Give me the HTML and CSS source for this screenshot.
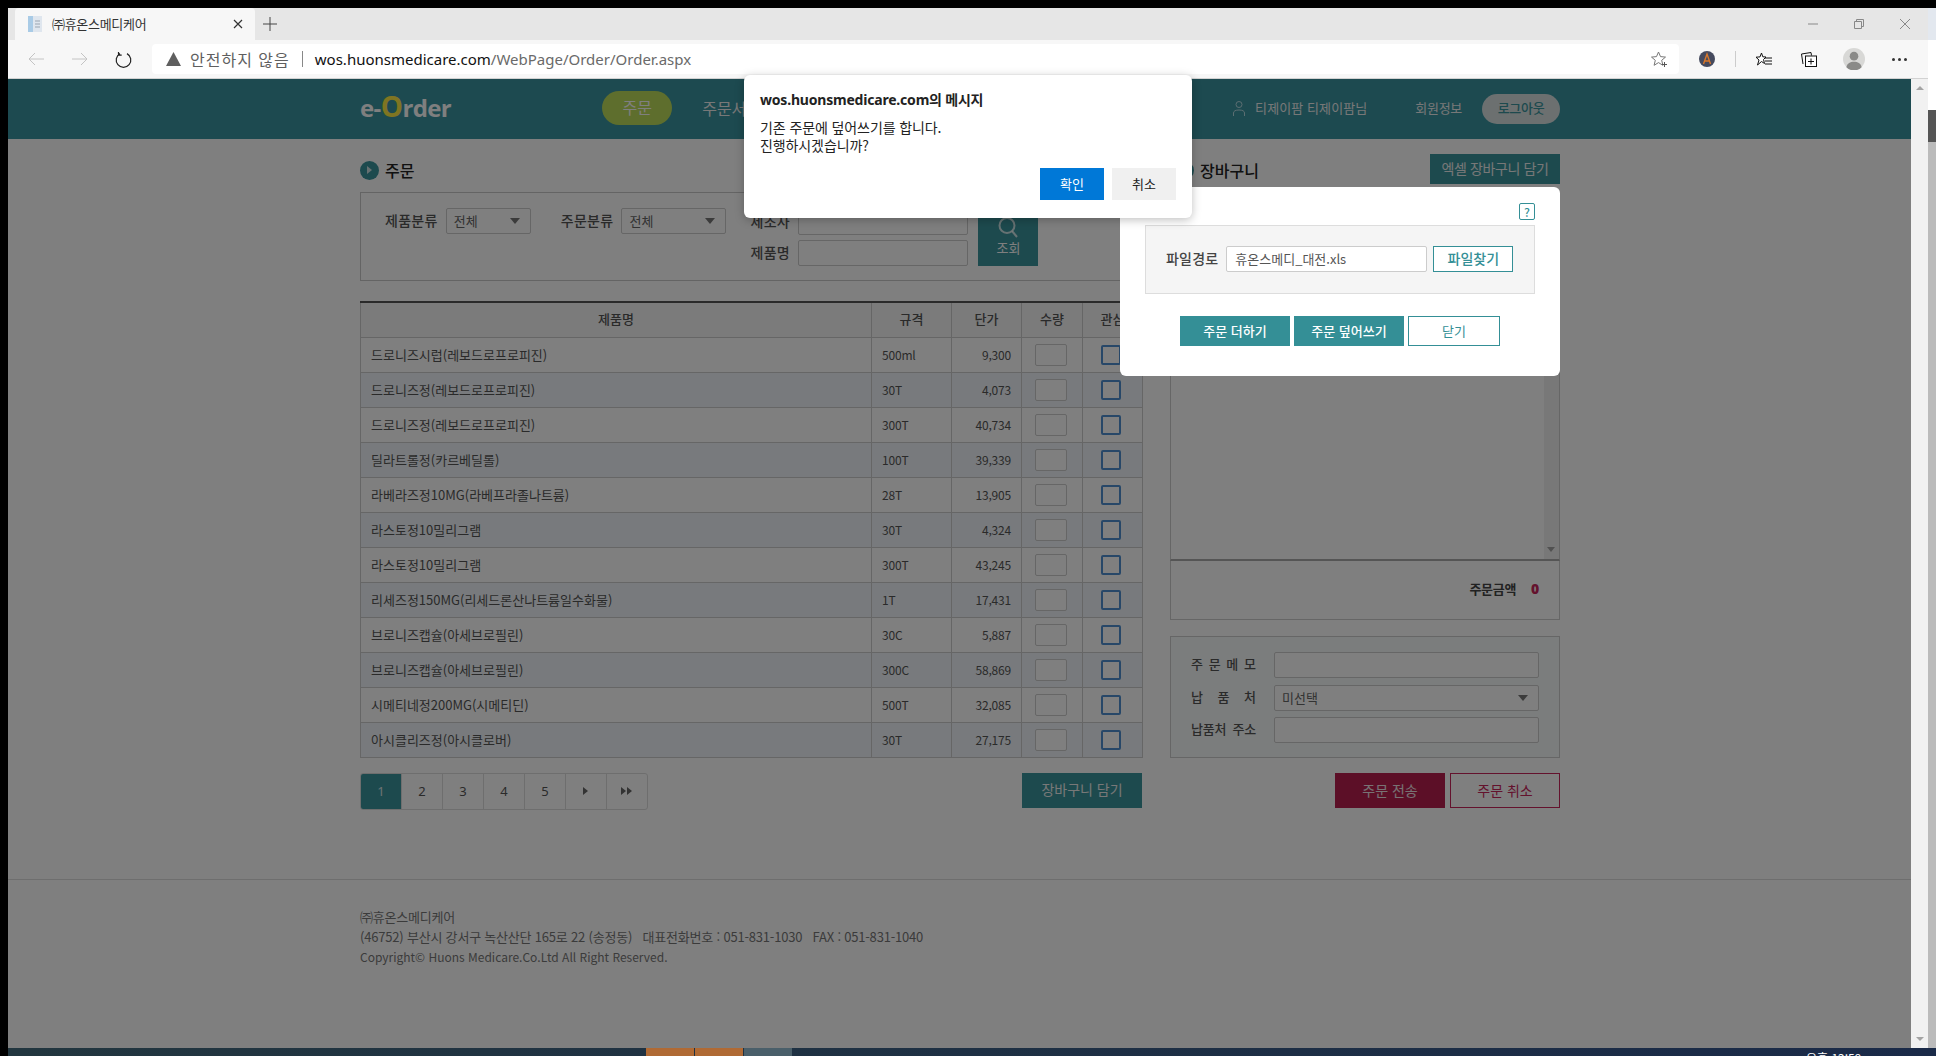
FILE: index.html
```html
<!DOCTYPE html>
<html lang="ko">
  <head>
    <meta charset="UTF-8" />
    <meta name="viewport" content="width=device-width, initial-scale=1.0" />
    <title>㈜휴온스메디케어</title>
    <link rel="stylesheet" href="styles.css">
  </head>
  <body>
    <div class="desk">
      <div class="browser">
        <!-- Tab strip -->
        <div class="tabstrip">
          <div class="tab">
            <svg class="favicon" width="16" height="16" viewBox="0 0 16 16">
              <rect x="1" y="0" width="14" height="16" fill="#dfe6ee" />
              <rect x="1" y="0" width="5" height="16" fill="#a9cbe6" />
              <path d="M8 5h5M8 8h5M8 11h5" stroke="#9aa5b1" fill="none" />
            </svg>
            <span class="tab-title">㈜휴온스메디케어</span>
            <svg class="tab-close" width="10" height="10" viewBox="0 0 10 10">
              <path d="M1 1l8 8M9 1l-8 8" stroke="#333" stroke-width="1.2" fill="none" />
            </svg>
          </div>
          <svg class="tab-new" width="14" height="14" viewBox="0 0 14 14">
            <path d="M7 0v14M0 7h14" stroke="#444" fill="none" />
          </svg>
          <div class="window-btns">
            <svg width="10" height="10" viewBox="0 0 10 10"><path d="M0 5h10" stroke="#888" fill="none" /></svg>
            <svg width="10" height="10" viewBox="0 0 10 10"><path d="M.5 2.5h7v7h-7zM2.5 2.5v-2h7v7h-2" stroke="#888" fill="none" /></svg>
            <svg width="10" height="10" viewBox="0 0 10 10"><path d="M0 0l10 10M10 0l-10 10" stroke="#888" fill="none" /></svg>
          </div>
        </div>

        <!-- Toolbar -->
        <div class="toolbar">
          <svg class="nav-back" width="16" height="14" viewBox="0 0 16 14">
            <path d="M16 7H1M7 1L1 7l6 6" stroke="#c4c4c4" fill="none" />
          </svg>
          <svg class="nav-forward" width="16" height="14" viewBox="0 0 16 14">
            <path d="M0 7h15M9 1l6 6-6 6" stroke="#c4c4c4" fill="none" />
          </svg>
          <svg class="nav-reload" width="17" height="17" viewBox="0 0 17 17">
            <path d="M5 2.6A7.3 7.3 0 1 0 12 2.6M3.500 1v3.200h3.200" stroke="#222" stroke-width="1.2" fill="none" />
          </svg>
          <div class="address">
            <svg width="15" height="14" viewBox="0 0 15 14"><path d="M7.500 0L15 14H0z" fill="#5f5f5f" /></svg>
            <span class="not-secure">안전하지 않음</span>
            <span class="address-sep"></span>
            <span class="url"><b>wos.huonsmedicare.com</b>/WebPage/Order/Order.aspx</span>
            <svg class="fav-add" width="17" height="16" viewBox="0 0 17 16">
              <path d="M7.500 1l2 4.600 5 .5-3.800 3.200 1.200 5-4.400-2.700-4.400 2.700 1.200-5L.5 6.100l5-.5z" stroke="#777" fill="none" />
              <path d="M13.500 11v5M11 13.500h5" stroke="#555" fill="none" />
            </svg>
          </div>
          <svg class="ext-icon" width="16" height="16" viewBox="0 0 16 16">
            <circle cx="8" cy="8" r="8" fill="#454a5e" />
            <path d="M4.500 13L8 3l3.500 10M6 10h4" stroke="#d9772a" stroke-width="1.400" fill="none" />
          </svg>
          <span class="tool-sep"></span>
          <svg class="tool-fav" width="16" height="15" viewBox="0 0 16 15">
            <path d="M5.500 1l1.300 3.800L10 5 7.500 7.500l1 4L5.500 9.500l-4 3.500 1.500-5L0 5.200l4-.3z" stroke="#111" fill="#fff" />
            <path d="M9 6h7M9 9h7M9 12h7" stroke="#111" fill="none" />
          </svg>
          <svg class="tool-coll" width="16" height="16" viewBox="0 0 16 16">
            <path d="M2 13L.5 3 10 1.500l.5 3" stroke="#111" fill="none" />
            <rect x="4.500" y="5" width="11" height="10.500" fill="#fff" stroke="#111" />
            <path d="M10 7.500v6M7 10.500h6" stroke="#111" fill="none" />
          </svg>
          <svg class="tool-profile" width="22" height="22" viewBox="0 0 23 23">
            <circle cx="11.500" cy="11.500" r="11.500" fill="#d8d8d6" />
            <circle cx="11.500" cy="8.500" r="4.500" fill="#8a8a88" />
            <path d="M3.500 20c1-4 4-5.500 8-5.500s7 1.500 8 5.500a11 11 0 0 1-16 0z" fill="#8a8a88" />
          </svg>
          <div class="tool-more"><i></i><i></i><i></i></div>
        </div>

        <div class="viewport">
          <div class="page">
            <header class="site-header">
              <div class="wrap header-inner">
                <a class="logo">e-<em>O</em>rder</a>
                <nav class="gnb">
                  <a class="gnb-on">주문</a>
                  <a>주문서조회</a>
                </nav>
                <div class="user">
                  <svg width="12" height="15" viewBox="0 0 12 15">
                    <circle cx="6" cy="3.500" r="3" stroke="#b8dce4" fill="none" />
                    <path d="M.5 15v-3c0-2 2-3 5.500-3s5.500 1 5.500 3v3" stroke="#b8dce4" fill="none" />
                  </svg>
                  <span>티제이팜 티제이팜님</span>
                </div>
                <a class="member">회원정보</a>
                <a class="logout">로그아웃</a>
              </div>
            </header>

            <main class="wrap main">
              <!-- Order list -->
              <section class="col-left">
                <h2 class="sec-title"><i class="bullet"></i><span>주문</span></h2>
                <div class="filter">
                  <label class="filter-label">제품분류</label>
                  <span class="select sel-a">전체</span>
                  <label class="filter-label label-b">주문분류</label>
                  <span class="select sel-b">전체</span>
                  <div class="filter-inputs">
                    <label class="filter-label">제조사</label>
                    <input type="text" />
                    <label class="filter-label">제품명</label>
                    <input type="text" />
                  </div>
                  <button class="search-btn">
                    <svg width="22" height="22" viewBox="0 0 22 22">
                      <circle cx="10" cy="9.500" r="7.500" stroke="#fff" stroke-opacity=".75" stroke-width="2" fill="none" />
                      <path d="M15 15l5 6" stroke="#fff" stroke-opacity=".75" stroke-width="2" fill="none" />
                    </svg>
                    조회
                  </button>
                </div>

                <table class="products">
                  <colgroup>
                    <col class="c-name" /><col class="c-spec" /><col class="c-price" /><col class="c-qty" /><col class="c-fav" />
                  </colgroup>
                  <thead>
                    <tr><th>제품명</th><th>규격</th><th>단가</th><th>수량</th><th>관심</th></tr>
                  </thead>
                  <tbody>
                    <tr><td>드로니즈시럽(레보드로프로피진)</td><td>500ml</td><td class="num">9,300</td><td class="qty"><input type="text" /></td><td class="fav"><i></i></td></tr>
                    <tr><td>드로니즈정(레보드로프로피진)</td><td>30T</td><td class="num">4,073</td><td class="qty"><input type="text" /></td><td class="fav"><i></i></td></tr>
                    <tr><td>드로니즈정(레보드로프로피진)</td><td>300T</td><td class="num">40,734</td><td class="qty"><input type="text" /></td><td class="fav"><i></i></td></tr>
                    <tr><td>딜라트롤정(카르베딜롤)</td><td>100T</td><td class="num">39,339</td><td class="qty"><input type="text" /></td><td class="fav"><i></i></td></tr>
                    <tr><td>라베라즈정10MG(라베프라졸나트륨)</td><td>28T</td><td class="num">13,905</td><td class="qty"><input type="text" /></td><td class="fav"><i></i></td></tr>
                    <tr><td>라스토정10밀리그램</td><td>30T</td><td class="num">4,324</td><td class="qty"><input type="text" /></td><td class="fav"><i></i></td></tr>
                    <tr><td>라스토정10밀리그램</td><td>300T</td><td class="num">43,245</td><td class="qty"><input type="text" /></td><td class="fav"><i></i></td></tr>
                    <tr><td>리세즈정150MG(리세드론산나트륨일수화물)</td><td>1T</td><td class="num">17,431</td><td class="qty"><input type="text" /></td><td class="fav"><i></i></td></tr>
                    <tr><td>브로니즈캡슐(아세브로필린)</td><td>30C</td><td class="num">5,887</td><td class="qty"><input type="text" /></td><td class="fav"><i></i></td></tr>
                    <tr><td>브로니즈캡슐(아세브로필린)</td><td>300C</td><td class="num">58,869</td><td class="qty"><input type="text" /></td><td class="fav"><i></i></td></tr>
                    <tr><td>시메티네정200MG(시메티딘)</td><td>500T</td><td class="num">32,085</td><td class="qty"><input type="text" /></td><td class="fav"><i></i></td></tr>
                    <tr><td>아시클리즈정(아시클로버)</td><td>30T</td><td class="num">27,175</td><td class="qty"><input type="text" /></td><td class="fav"><i></i></td></tr>
                  </tbody>
                </table>

                <div class="list-foot">
                  <div class="paging">
                    <a class="on">1</a><a>2</a><a>3</a><a>4</a><a>5</a>
                    <a><i class="arrow"></i></a>
                    <a><i class="arrow"></i><i class="arrow"></i></a>
                  </div>
                  <button class="btn-teal btn-cart">장바구니 담기</button>
                </div>
              </section>

              <!-- Cart -->
              <section class="col-right">
                <div class="cart-head">
                  <h2 class="sec-title"><i class="bullet"></i><span>장바구니</span></h2>
                  <button class="btn-teal btn-excel">엑셀 장바구니 담기</button>
                </div>
                <div class="cart-list">
                  <div class="cart-scroll"><i class="scroll-down"></i></div>
                </div>
                <div class="cart-total">
                  <span>주문금액</span><strong>0</strong>
                </div>
                <div class="memo">
                  <label class="memo-label">주 문 메 모</label>
                  <input type="text" />
                  <label class="memo-label">납 품 처</label>
                  <span class="select">미선택</span>
                  <label class="memo-label memo-addr">납품처 주소</label>
                  <input type="text" />
                </div>
                <div class="order-btns">
                  <button class="btn-send">주문 전송</button>
                  <button class="btn-cancel">주문 취소</button>
                </div>
              </section>
            </main>

            <footer class="site-footer">
              <div class="wrap">
                <p class="foot-kr">㈜휴온스메디케어</p>
                <p class="foot-kr">(46752) 부산시 강서구 녹산산단 165로 22 (송정동) &nbsp; 대표전화번호 : 051-831-1030 &nbsp; FAX : 051-831-1040</p>
                <p>Copyright© Huons Medicare.Co.Ltd All Right Reserved.</p>
              </div>
            </footer>

            <div class="dim"></div>

            <!-- Excel upload layer -->
            <div class="excel-layer">
              <div class="help-wrap"><span class="help">?</span></div>
              <div class="file-box">
                <label>파일경로</label>
                <input type="text" value="휴온스메디_대전.xls" />
                <button>파일찾기</button>
              </div>
              <div class="layer-btns">
                <button class="btn-layer">주문 더하기</button>
                <button class="btn-layer">주문 덮어쓰기</button>
                <button class="btn-close">닫기</button>
              </div>
            </div>
          </div>

          <div class="scrollbar">
            <i class="sb-up"></i>
            <i class="sb-down"></i>
          </div>

          <!-- Browser confirm dialog -->
          <div class="confirm">
            <h3>wos.huonsmedicare.com의 메시지</h3>
            <p>기존 주문에 덮어쓰기를 합니다.<br />진행하시겠습니까?</p>
            <div class="confirm-btns">
              <button class="ok">확인</button>
              <button>취소</button>
            </div>
          </div>
        </div>
      </div>
      <div class="side-strip">
        <i class="s1"></i><i class="s2"></i><i class="s3"></i><i class="s4"></i>
      </div>
    </div>

    <div class="taskbar">
      <i class="task task-a"></i><i class="task task-a"></i><i class="task task-b"></i>
      <span class="clock">오후 12:59</span>
    </div>
  </body>
</html>
```

FILE: styles.css
```css
* {
  margin: 0;
  padding: 0;
  box-sizing: border-box;
}

html,
body {
  height: 1056px;
  overflow: hidden;
}

body {
  background: #000;
  padding: 8px 0 0 8px;
  font-family: 'Noto Sans CJK KR', 'Noto Sans', sans-serif;
  font-size: 13px;
  color: #555;
}

i {
  display: block;
}

a {
  display: block;
}

button {
  font-family: inherit;
  border: none;
  padding-bottom: 2px;
  cursor: pointer;
}

input {
  font-family: inherit;
  background: #fff;
  border: 1px solid #ccc;
  border-radius: 2px;
  outline: none;
}

.desk {
  display: flex;
  height: 1040px;
}

.browser {
  width: 1920px;
  display: flex;
  flex-direction: column;
}

/* Tab strip */
.tabstrip {
  height: 32px;
  background: #e6e6e6;
  display: flex;
  align-items: center;
  flex-shrink: 0;
}

.tab {
  width: 240px;
  height: 32px;
  margin-left: 7px;
  background: #f7f7f7;
  border-radius: 4px 4px 0 0;
  display: flex;
  align-items: center;
  padding: 0 12px;
}

.favicon {
  flex-shrink: 0;
}

.tab-title {
  margin-left: 9px;
  padding-bottom: 2px;
  font-size: 13px;
  letter-spacing: -0.3px;
  color: #333;
}

.tab-close {
  margin-left: auto;
}

.tab-new {
  margin-left: 8px;
}

.window-btns {
  margin-left: auto;
  display: flex;
  gap: 36px;
  padding-right: 18px;
}

/* Toolbar */
.toolbar {
  height: 39px;
  background: #f7f7f7;
  border-bottom: 1px solid #d2d2d2;
  display: flex;
  align-items: center;
  flex-shrink: 0;
}

.nav-back {
  margin-left: 20px;
}

.nav-forward {
  margin-left: 28px;
}

.nav-reload {
  margin-left: 27px;
}

.address {
  width: 1527px;
  height: 30px;
  margin-left: 20px;
  background: #fff;
  border-radius: 4px;
  display: flex;
  align-items: center;
  padding-left: 14px;
  font-family: 'Noto Sans', 'Noto Sans CJK KR', sans-serif;
}

.not-secure {
  margin-left: 9px;
  font-size: 16px;
  letter-spacing: 1px;
  color: #5f5f5f;
  font-family: 'Noto Sans CJK KR', sans-serif;
}

.address-sep {
  width: 1px;
  height: 16px;
  margin: 0 12px;
  background: #888;
}

.url {
  font-size: 15px;
  color: #6a6a6a;
}

.url b {
  font-weight: 400;
  color: #111;
}

.fav-add {
  margin-left: auto;
  margin-right: 11px;
}

.ext-icon {
  margin-left: 20px;
}

.tool-sep {
  width: 1px;
  height: 16px;
  margin-left: 20px;
  background: #ccc;
}

.tool-fav {
  margin-left: 20px;
}

.tool-coll {
  margin-left: 29px;
}

.tool-profile {
  margin-left: 26px;
}

.tool-more {
  margin-left: 27px;
  display: flex;
  gap: 3px;
}

.tool-more i {
  width: 3px;
  height: 3px;
  background: #333;
  border-radius: 50%;
}

/* Page */
.viewport {
  position: relative;
  flex: 1;
  display: flex;
  min-height: 0;
}

.page {
  position: relative;
  width: 1903px;
  background: #fff;
}

.scrollbar {
  width: 17px;
  background: #f1f1f1;
  display: flex;
  flex-direction: column;
  justify-content: space-between;
  align-items: center;
  padding: 7px 0;
}

.sb-up {
  border: 4px solid transparent;
  border-top: 0;
  border-bottom: 4px solid #a3a3a3;
  width: 0;
}

.sb-down {
  border: 4px solid transparent;
  border-bottom: 0;
  border-top: 4px solid #a3a3a3;
  width: 0;
}

.wrap {
  width: 1200px;
  margin-left: 352px;
}

.site-header {
  height: 60px;
  background: #3a94a0;
}

.header-inner {
  height: 60px;
  padding-bottom: 2px;
  display: flex;
  align-items: center;
}

.logo {
  margin-top: -2px;
  font-family: 'Open Sans', sans-serif;
  font-size: 24px;
  font-weight: 700;
  letter-spacing: -0.6px;
  color: #fff;
}

.logo em {
  font-style: normal;
  color: #ffea44;
  font-size: 28px;
  line-height: 20px;
}

.gnb {
  margin-left: 151px;
  display: flex;
  align-items: center;
  gap: 30px;
  font-size: 16px;
  color: #f0f0f0;
}

.gnb-on {
  width: 70px;
  height: 34px;
  line-height: 32px;
  border-radius: 17px;
  background: #bcdc5a;
  text-align: center;
  color: #fff;
}

.user {
  margin-left: auto;
  margin-top: -1px;
  display: flex;
  align-items: center;
  gap: 10px;
  font-size: 13px;
  color: #f0f0f0;
  letter-spacing: 0.1px;
}

.user svg {
  margin-top: 2px;
}

.member {
  margin-left: 48px;
  margin-top: -1px;
  font-size: 13px;
  color: #f0f0f0;
  letter-spacing: -0.3px;
}

.logout {
  width: 78px;
  height: 30px;
  line-height: 28px;
  margin-left: 20px;
  margin-top: 2px;
  border-radius: 15px;
  background: #d8e0e0;
  text-align: center;
  color: #3a949c;
  font-size: 13px;
  letter-spacing: -0.3px;
  font-weight: 500;
}

.main {
  height: 740px;
  display: flex;
  gap: 28px;
}

.col-left {
  width: 782px;
  padding-top: 22px;
}

.col-right {
  width: 390px;
  padding-top: 15px;
}

.sec-title {
  height: 19px;
  display: flex;
  align-items: center;
  gap: 6px;
  font-size: 16px;
  font-weight: 500;
  color: #222;
}

.sec-title span {
  margin-top: -2px;
}

.bullet {
  width: 19px;
  height: 19px;
  border-radius: 50%;
  background: #3a949c;
  position: relative;
}

.bullet::after {
  content: '';
  position: absolute;
  left: 7px;
  top: 5px;
  border: 4.500px solid transparent;
  border-left: 5px solid #cfe3e5;
  border-right: 0;
}

/* Filter */
.filter {
  height: 89px;
  margin-top: 12px;
  border: 1px solid #c8c8c8;
  display: flex;
  align-items: flex-start;
  padding: 15px 0 0 24px;
}

.filter-label {
  font-size: 14px;
  font-weight: 500;
  line-height: 24px;
  color: #555;
  letter-spacing: 0.3px;
  white-space: nowrap;
}

.select {
  display: block;
  position: relative;
  height: 26px;
  line-height: 23px;
  background: #fff;
  border: 1px solid #ccc;
  border-radius: 2px;
  padding-left: 7px;
  font-size: 13px;
  color: #666;
}

.select::after {
  content: '';
  position: absolute;
  right: 10px;
  top: 9px;
  border: 5px solid transparent;
  border-top: 6px solid #777;
  border-bottom: 0;
}

.sel-a {
  width: 85px;
  margin-left: 8px;
}

.label-b {
  margin-left: 30px;
}

.sel-b {
  width: 105px;
  margin-left: 8px;
}

.filter-inputs {
  margin-left: 24px;
  margin-top: 1px;
  display: grid;
  grid-template-columns: 40px 170px;
  column-gap: 8px;
  row-gap: 5px;
}

.filter-inputs input {
  height: 26px;
}

.search-btn {
  width: 60px;
  height: 57px;
  margin-left: 10px;
  margin-top: 1px;
  background: #3a949c;
  color: #fff;
  font-size: 13px;
  display: flex;
  flex-direction: column;
  align-items: center;
  justify-content: center;
  gap: 0;
}

/* Product table */
.products {
  width: 782px;
  margin-top: 20px;
  table-layout: fixed;
  border-collapse: collapse;
  border-top: 2px solid #555;
  font-size: 12px;
}

.c-name { width: 511px; }
.c-spec { width: 80px; }
.c-price { width: 70px; }
.c-qty { width: 61px; }
.c-fav { width: 60px; }

.products th {
  height: 35px;
  padding-bottom: 2px;
  background: #f6f6f6;
  border: 1px solid #ccc;
  font-size: 13px;
  font-weight: 500;
  color: #555;
}

.products td {
  height: 35px;
  border: 1px solid #ccc;
  padding: 0 10px;
  color: #555;
  letter-spacing: -0.2px;
  white-space: nowrap;
}

.products td:first-child {
  font-size: 13px;
  letter-spacing: 0;
}

.products tbody tr:nth-child(even) td {
  background: #f1f5fa;
}

.products td.num {
  text-align: right;
}

.products td.qty {
  padding: 0;
}

.qty input {
  display: block;
  width: 32px;
  height: 22px;
  margin-left: 13px;
}

.products td.fav {
  padding: 0;
}

.fav i {
  width: 20px;
  height: 20px;
  margin-left: 18px;
  border: 2px solid #4f8fd0;
  border-radius: 2px;
  background: #fff;
}

.list-foot {
  margin-top: 15px;
  display: flex;
  justify-content: space-between;
  align-items: flex-start;
}

.paging {
  display: flex;
  width: 288px;
  height: 37px;
  border: 1px solid #ddd;
  border-radius: 3px;
  overflow: hidden;
  background: #fff;
}

.paging a {
  flex: 1;
  padding-bottom: 1px;
  text-align: center;
  border-left: 1px solid #ddd;
  display: flex;
  align-items: center;
  justify-content: center;
  font-size: 13px;
  font-family: 'Noto Sans', sans-serif;
  color: #555;
}

.paging a:first-child {
  border-left: 0;
}

.paging a.on {
  background: #3a949c;
  color: #d8e6e8;
}

.arrow {
  border: 4.500px solid transparent;
  border-left: 5px solid #666;
  border-right: 0;
  margin-right: 1px;
}

.btn-teal {
  background: #3a949c;
  color: #f0f0f0;
}

.btn-cart {
  width: 120px;
  height: 35px;
  font-size: 14px;
}

/* Cart */
.cart-head {
  height: 30px;
  display: flex;
  justify-content: space-between;
  align-items: center;
}

.cart-head .sec-title {
  margin: 3px 0 0 5px;
}

.btn-excel {
  width: 130px;
  height: 30px;
  font-size: 14px;
  letter-spacing: -0.4px;
}

.cart-list {
  height: 369px;
  margin-top: 8px;
  border: 1px solid #ccc;
  border-bottom: 2px solid #aaa;
  display: flex;
  justify-content: flex-end;
}

.cart-scroll {
  width: 15px;
  background: #f1f1f1;
  position: relative;
}

.scroll-down {
  position: absolute;
  left: 3px;
  bottom: 7px;
  border: 4.500px solid transparent;
  border-top: 5px solid #a3a3a3;
  border-bottom: 0;
}

.cart-total {
  height: 59px;
  padding: 0 20px 3px 0;
  border: 1px solid #ccc;
  border-top: 0;
  display: flex;
  align-items: center;
  justify-content: flex-end;
  gap: 15px;
  font-size: 13px;
  font-weight: 700;
  color: #444;
  letter-spacing: -0.3px;
}

.cart-total strong {
  color: #c8255a;
  font-size: 14px;
  font-family: 'Noto Sans', sans-serif;
}

.memo {
  height: 122px;
  margin-top: 16px;
  padding: 15px 20px 0 20px;
  background: #f6fafa;
  border: 1px solid #ccc;
  display: grid;
  grid-template-columns: 65px 265px;
  grid-auto-rows: 26px;
  column-gap: 18px;
  row-gap: 6.500px;
}

.memo input {
  height: 26px;
}

.memo-label {
  font-size: 13px;
  font-weight: 500;
  line-height: 24px;
  color: #555;
  text-align: justify;
  text-align-last: justify;
}

.memo-addr {
  white-space: nowrap;
  letter-spacing: -0.2px;
}

.order-btns {
  margin-top: 15px;
  display: flex;
  justify-content: flex-end;
  gap: 5px;
}

.order-btns button {
  width: 110px;
  height: 35px;
  font-size: 14px;
}

.btn-send {
  background: #b91f4f;
  color: #f0e6e9;
}

.btn-cancel {
  background: #fff;
  border: 1px solid #c8255a;
  color: #c8255a;
}

/* Footer */
.site-footer {
  border-top: 1px solid #ddd;
  padding-top: 27px;
  font-size: 12px;
  line-height: 20px;
  color: #777;
}

.foot-kr {
  font-size: 13px;
  letter-spacing: -0.2px;
}

.dim {
  position: absolute;
  inset: 0;
  background: rgba(0, 0, 0, 0.5);
}

/* Excel upload layer */
.excel-layer {
  position: absolute;
  left: 1112px;
  top: 108px;
  width: 440px;
  height: 189px;
  background: #fff;
  border-radius: 6px;
  padding: 16px 25px 0 25px;
}

.help-wrap {
  height: 22px;
  display: flex;
  justify-content: flex-end;
}

.help {
  width: 16px;
  height: 17px;
  line-height: 15px;
  border: 1px solid #348f96;
  border-radius: 2px;
  text-align: center;
  font-size: 12px;
  font-weight: 500;
  color: #348f96;
}

.file-box {
  height: 69px;
  background: #f5f5f5;
  border: 1px solid #ddd;
  display: flex;
  align-items: center;
  padding: 0 0 2px 20px;
}

.file-box label {
  padding-bottom: 2px;
  font-size: 14px;
  font-weight: 500;
  letter-spacing: 0.2px;
  color: #444;
}

.file-box input {
  width: 201px;
  height: 26px;
  margin-left: 8px;
  padding-left: 8px;
  font-size: 13px;
  color: #555;
}

.file-box button {
  width: 80px;
  height: 26px;
  margin-left: 6px;
  background: #fff;
  border: 1px solid #348f96;
  color: #348f96;
  font-size: 14px;
  font-weight: 500;
}

.layer-btns {
  margin-top: 22px;
  padding-left: 35px;
  display: flex;
  gap: 4px;
}

.btn-layer {
  width: 110px;
  height: 30px;
  background: #348f96;
  color: #fff;
  font-size: 13px;
  font-weight: 500;
}

.btn-close {
  width: 92px;
  height: 30px;
  background: #fff;
  border: 1px solid #348f96;
  color: #348f96;
  font-size: 13px;
}

/* Confirm dialog */
.confirm {
  position: absolute;
  left: 736px;
  top: -4px;
  width: 448px;
  height: 143px;
  background: #fff;
  border-radius: 6px;
  box-shadow: 0 2px 10px rgba(0, 0, 0, 0.25);
  padding: 15px 16px 0 16px;
  color: #222;
}

.confirm h3 {
  font-family: 'Noto Sans', 'Noto Sans CJK KR', sans-serif;
  font-size: 14px;
  font-weight: 700;
  line-height: 20px;
  letter-spacing: -0.2px;
}

.confirm p {
  margin-top: 8px;
  font-size: 14px;
  line-height: 18px;
  letter-spacing: -0.1px;
}

.confirm-btns {
  margin-top: 14px;
  display: flex;
  justify-content: flex-end;
  gap: 8px;
}

.confirm-btns button {
  width: 64px;
  height: 32px;
  background: #f0f0f0;
  font-size: 13px;
  color: #222;
}

.confirm-btns .ok {
  background: #0078d7;
  color: #fff;
}

/* Outside the window */
.side-strip {
  width: 8px;
}

.s1 { height: 32px; background: #e3e8ef; }
.s2 { height: 70px; background: #fff; }
.s3 { height: 32px; background: #555; }
.s4 { height: 906px; background: #bbb; }

.taskbar {
  position: relative;
  height: 8px;
  overflow: hidden;
  background: linear-gradient(to right, #22363f, #1a2a48);
  display: flex;
  padding-left: 638px;
  gap: 1px;
}

.task {
  width: 48px;
  height: 8px;
}

.task-a {
  background: #b06a34;
}

.task-b {
  background: #4a5f6a;
}

.clock {
  position: absolute;
  left: 1798px;
  top: 1px;
  font-size: 12px;
  color: #fff;
}
```
